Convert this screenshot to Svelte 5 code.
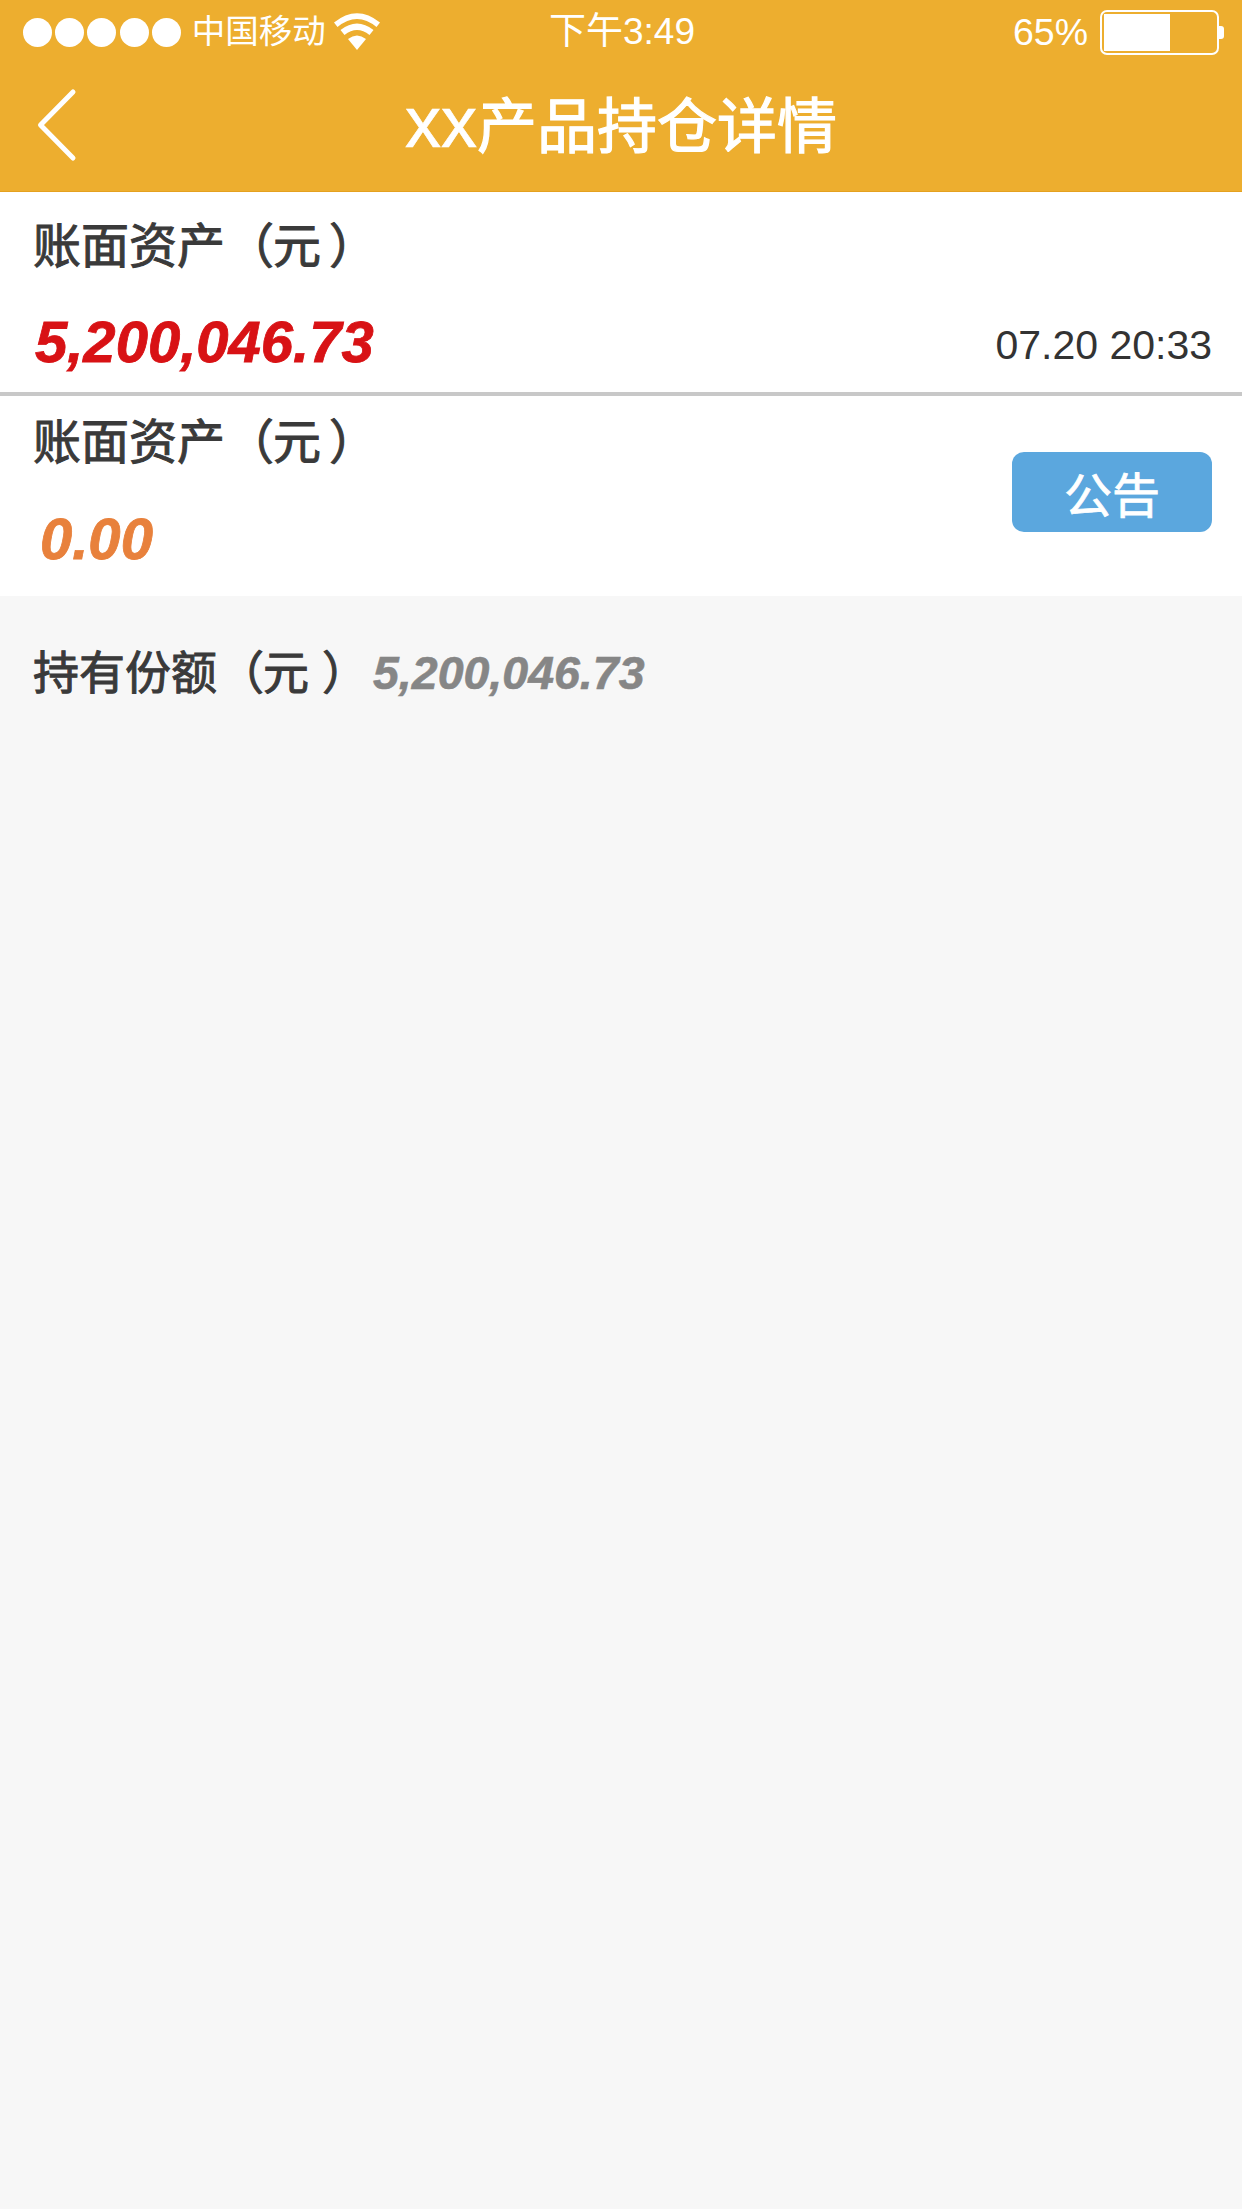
<script>
	let dots = [1, 2, 3, 4, 5]
	let rows = [
		{ amount: '5,200,046.73', tone: 'red', side: '07.20 20:33' },
		{ amount: '0.00', tone: 'orange', button: '公告' }
	]
</script>

<div class="page">
	<header class="top">
		<div class="status">
			<div class="carrier">
				<div class="dots">
					{#each dots as d (d)}
						<span class="dot"></span>
					{/each}
				</div>
				<span class="carrier-name">中国移动</span>
				<svg class="wifi" viewBox="0 0 46 37" width="46" height="37">
					<path d="M23 37 L14 26 Q23 19 32 26 Z" fill="#fff" />
					<path d="M10.5 22 L6.5 17 Q23 4 39.5 17 L35.5 22 Q23 12 10.5 22 Z" fill="#fff" />
					<path d="M3.5 14 L0 9.5 Q23 -9 46 9.5 L42.5 14 Q23 -2 3.5 14 Z" fill="#fff" />
				</svg>
			</div>
			<span class="clock">下午3:49</span>
			<div class="power">
				<span class="percent">65%</span>
				<div class="battery">
					<div class="battery-fill"></div>
				</div>
				<span class="battery-cap"></span>
			</div>
		</div>
		<div class="nav">
			<svg class="back" viewBox="0 0 42 76" width="42" height="76">
				<path d="M38 5 L5.500 38 L38 71" fill="none" stroke="#fff" stroke-width="5" stroke-linecap="round" stroke-linejoin="round" />
			</svg>
			<h1 class="title"><span class="xx">xx</span>产品持仓详情</h1>
		</div>
	</header>

	{#each rows as row, i}
		<section class="card" class:ruled={i === 0}>
			<div class="card-main">
				<div class="label">账面资产<span class="open">（</span><span>元</span><span class="close">）</span></div>
				<div class="amount {row.tone}">{row.amount}</div>
			</div>
			{#if row.side}
				<div class="side">{row.side}</div>
			{/if}
			{#if row.button}
				<button class="notice">{row.button}</button>
			{/if}
		</section>
	{/each}

	<div class="holding">
		<span class="holding-label">持有份额<span class="open">（</span><span>元</span><span class="close">）</span></span>
		<span class="holding-value">5,200,046.73</span>
	</div>
</div>

<style>
	:global(body) {
		margin: 0;
		background: #f7f7f7;
	}
	.page {
		width: 1242px;
		height: 2209px;
		background: #f7f7f7;
		font-family: "Liberation Sans", "Noto Sans CJK SC", sans-serif;
		color: #333;
		overflow: hidden;
	}
	.top {
		height: 191px;
		background: #edae2f;
		border-bottom: 1px solid #e5a11f;
		color: #fff;
	}
	.status {
		height: 64px;
		display: flex;
		align-items: center;
		justify-content: space-between;
		position: relative;
		padding: 0 18px 0 23px;
	}
	.carrier {
		display: flex;
		align-items: center;
	}
	.dots {
		display: flex;
		gap: 3.2px;
	}
	.dot {
		width: 29px;
		height: 29px;
		border-radius: 50%;
		background: #fff;
	}
	.carrier-name {
		font-size: 33.500px;
		margin-left: 11px;
		line-height: 40px;
		white-space: nowrap;
	}
	.wifi {
		margin-left: 8px;
		margin-top: -1px;
	}
	.clock {
		position: absolute;
		left: 549px;
		font-size: 37px;
		line-height: 64px;
	}
	.power {
		display: flex;
		align-items: center;
	}
	.percent {
		font-size: 37.500px;
		margin-right: 12px;
	}
	.battery {
		width: 119px;
		height: 45px;
		box-sizing: border-box;
		border: 2px solid #fff;
		border-radius: 7px;
		padding: 2px;
	}
	.battery-fill {
		width: 66px;
		height: 100%;
		background: #fff;
	}
	.battery-cap {
		width: 5px;
		height: 13px;
		background: #fff;
		border-radius: 0 3px 3px 0;
	}
	.nav {
		height: 127px;
		position: relative;
		display: flex;
		align-items: center;
		justify-content: center;
	}
	.back {
		position: absolute;
		left: 35px;
		top: 23px;
	}
	.title {
		margin: 0;
		font-size: 60px;
		line-height: 72px;
		font-weight: 400;
		white-space: nowrap;
		-webkit-text-stroke: 1.2px #fff;
	}
	.xx {
		font-size: 72px;
		line-height: 60px;
		vertical-align: 1px;
		-webkit-text-stroke: 0.6px #fff;
	}
	.card {
		height: 200px;
		box-sizing: border-box;
		background: #fff;
		display: flex;
		justify-content: space-between;
		padding: 0 30px 0 33px;
	}
	.card.ruled {
		height: 204px;
		border-bottom: 4px solid #c8c8c8;
	}
	.card-main {
		display: flex;
		flex-direction: column;
	}
	.label {
		font-size: 48px;
		line-height: 60px;
		margin-top: 17px;
		color: #3a3a3a;
		white-space: nowrap;
		-webkit-text-stroke: 1px #3a3a3a;
	}
	.card.ruled .label {
		margin-top: 25px;
	}
	.open {
		margin-left: 1px;
		margin-right: -1px;
	}
	.close {
		margin-left: 8px;
		margin-right: -24px;
	}
	.amount {
		font-size: 58px;
		font-weight: 700;
		font-style: italic;
		line-height: 66px;
		margin-top: 33px;
		margin-left: 2px;
		-webkit-text-stroke: 0.8px currentColor;
	}
	.card.ruled .amount {
		margin-top: 32px;
	}
	.red {
		color: #d81215;
	}
	.orange {
		color: #e8813c;
		margin-left: 7px;
	}
	.side {
		align-self: flex-end;
		font-size: 41px;
		line-height: 46px;
		margin-bottom: 24px;
	}
	.notice {
		align-self: center;
		width: 200px;
		height: 80px;
		margin-top: -8px;
		border: 0;
		border-radius: 12px;
		background: #5ba7de;
		color: #fff;
		font-family: inherit;
		font-size: 48px;
		-webkit-text-stroke: 0.8px #fff;
		padding: 0;
	}
	.holding {
		display: flex;
		align-items: center;
		padding: 47px 0 0 33px;
		height: 60px;
	}
	.holding-label {
		font-size: 46px;
		color: #3a3a3a;
		white-space: nowrap;
		-webkit-text-stroke: 1px #3a3a3a;
		line-height: 60px;
	}
	.holding-label .close {
		margin-left: 13px;
		margin-right: -29px;
	}
	.holding-value {
		font-size: 46.500px;
		font-weight: 700;
		font-style: italic;
		color: #868686;
		margin-left: 34px;
		-webkit-text-stroke: 0.6px #868686;
	}
</style>
